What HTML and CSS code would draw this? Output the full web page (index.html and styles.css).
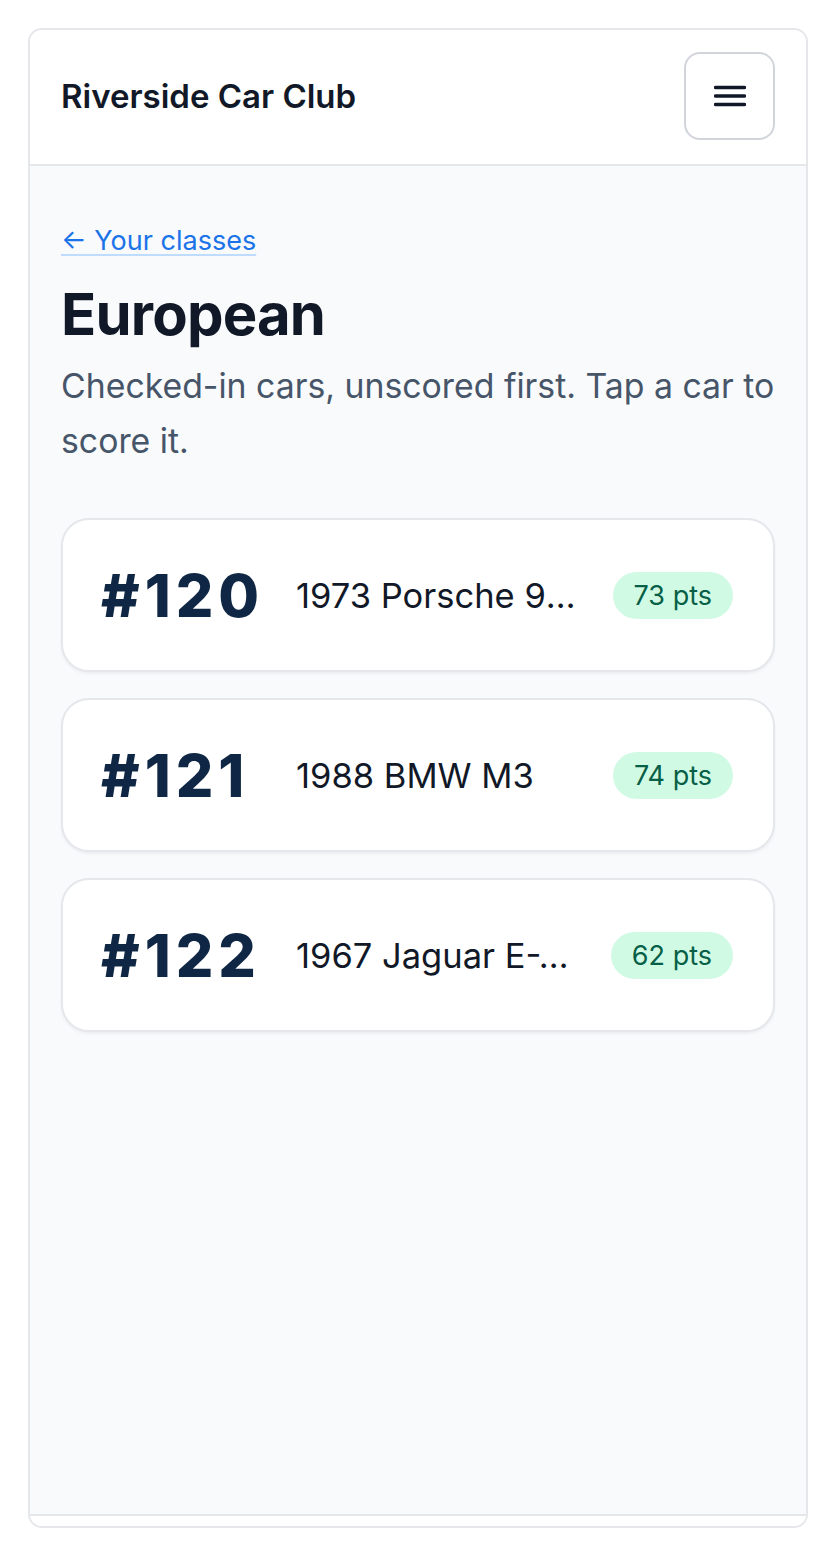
FILE: index.html
```html
<!DOCTYPE html>
<html lang="en">
<head>
<meta charset="utf-8">
<title>European – Riverside Car Club</title>
<link rel="stylesheet" href="styles.css">
</head>
<body>
<div class="frame">
  <header class="topbar">
    <div class="brand">Riverside Car Club</div>
    <button class="menu-btn" aria-label="Menu">
      <svg width="32" height="24" viewBox="0 0 32 24" aria-hidden="true">
        <path d="M1.5 3.5h29M1.5 12h29M1.5 20.5h29" stroke="#111827" stroke-width="3.4" stroke-linecap="round" fill="none"/>
      </svg>
    </button>
  </header>
  <main class="content">
    <a class="back-link" href="#">← Your classes</a>
    <h1 class="title">European</h1>
    <p class="subtitle">Checked-in cars, unscored first. Tap a car to score it.</p>
    <div class="car-list">
      <a class="car-card" href="#">
        <span class="car-num">#120</span>
        <span class="car-name">1973 Porsche 911 Carrera RS</span>
        <span class="pts">73 pts</span>
      </a>
      <a class="car-card" href="#">
        <span class="car-num">#121</span>
        <span class="car-name">1988 BMW M3</span>
        <span class="pts">74 pts</span>
      </a>
      <a class="car-card" href="#">
        <span class="car-num">#122</span>
        <span class="car-name">1967 Jaguar E-Type Series 1</span>
        <span class="pts">62 pts</span>
      </a>
    </div>
  </main>
  <footer class="foot"></footer>
</div>
</body>
</html>
```

FILE: styles.css
```css
* { box-sizing: border-box; }
html, body { margin: 0; padding: 0; }
body {
  background: #ffffff;
  font-family: Inter, "Noto Sans", "Liberation Sans", sans-serif;
  padding: 28px;
  height: 1556px;
}
.frame {
  height: 100%;
  border: 2px solid #e5e7eb;
  border-radius: 14px;
  overflow: hidden;
  display: flex;
  flex-direction: column;
  background: #ffffff;
}
.topbar {
  display: flex;
  align-items: center;
  justify-content: space-between;
  padding: 22px 31px 24px 31px;
  background: #ffffff;
  border-bottom: 2px solid #e5e7eb;
}
.brand {
  font-size: 33px;
  font-weight: 600;
  color: #111827;
  letter-spacing: 0;
}
.menu-btn {
  width: 91px;
  height: 88px;
  border: 2px solid #d1d5db;
  border-radius: 16px;
  background: #ffffff;
  display: flex;
  align-items: center;
  justify-content: center;
  padding: 0;
}
.content {
  flex: 1;
  background: #f8fafc;
  padding: 55px 31px 0 31px;
}
.back-link {
  font-size: 27px;
  line-height: 40px;
  color: #1a73e8;
  text-decoration: underline;
  text-decoration-color: #bfdbfe;
  text-decoration-thickness: 2px;
  text-underline-offset: 4px;
}
.title {
  margin: 18px 0 0 0;
  font-size: 58px;
  line-height: 70px;
  font-weight: 700;
  color: #111827;
  letter-spacing: -0.8px;
}
.subtitle {
  margin: 9px 0 0 0;
  font-size: 33.8px;
  line-height: 55px;
  color: #475569;
}
.car-list {
  margin-top: 50px;
  display: flex;
  flex-direction: column;
  gap: 26px;
}
.car-card {
  display: grid;
  grid-template-columns: 164px minmax(0, 1fr) auto;
  align-items: center;
  column-gap: 29px;
  height: 154px;
  padding: 0 40px;
  background: #ffffff;
  border: 2px solid #e5e7eb;
  border-radius: 28px;
  box-shadow: 0 2px 3px rgba(15, 23, 42, 0.05);
  text-decoration: none;
}
.car-num {
  margin-left: -2px;
  font-size: 59px;
  font-weight: 800;
  color: #0f2744;
  letter-spacing: 5px;
  white-space: nowrap;
}
.car-name {
  font-size: 34.5px;
  color: #111827;
  white-space: nowrap;
  overflow: hidden;
  text-overflow: ellipsis;
}
.pts {
  background: #d1fae5;
  color: #065f46;
  font-size: 27px;
  line-height: 47px;
  padding: 0 21px;
  border-radius: 24px;
  white-space: nowrap;
}
.foot {
  height: 12px;
  background: #ffffff;
  border-top: 2px solid #e5e7eb;
}
```
